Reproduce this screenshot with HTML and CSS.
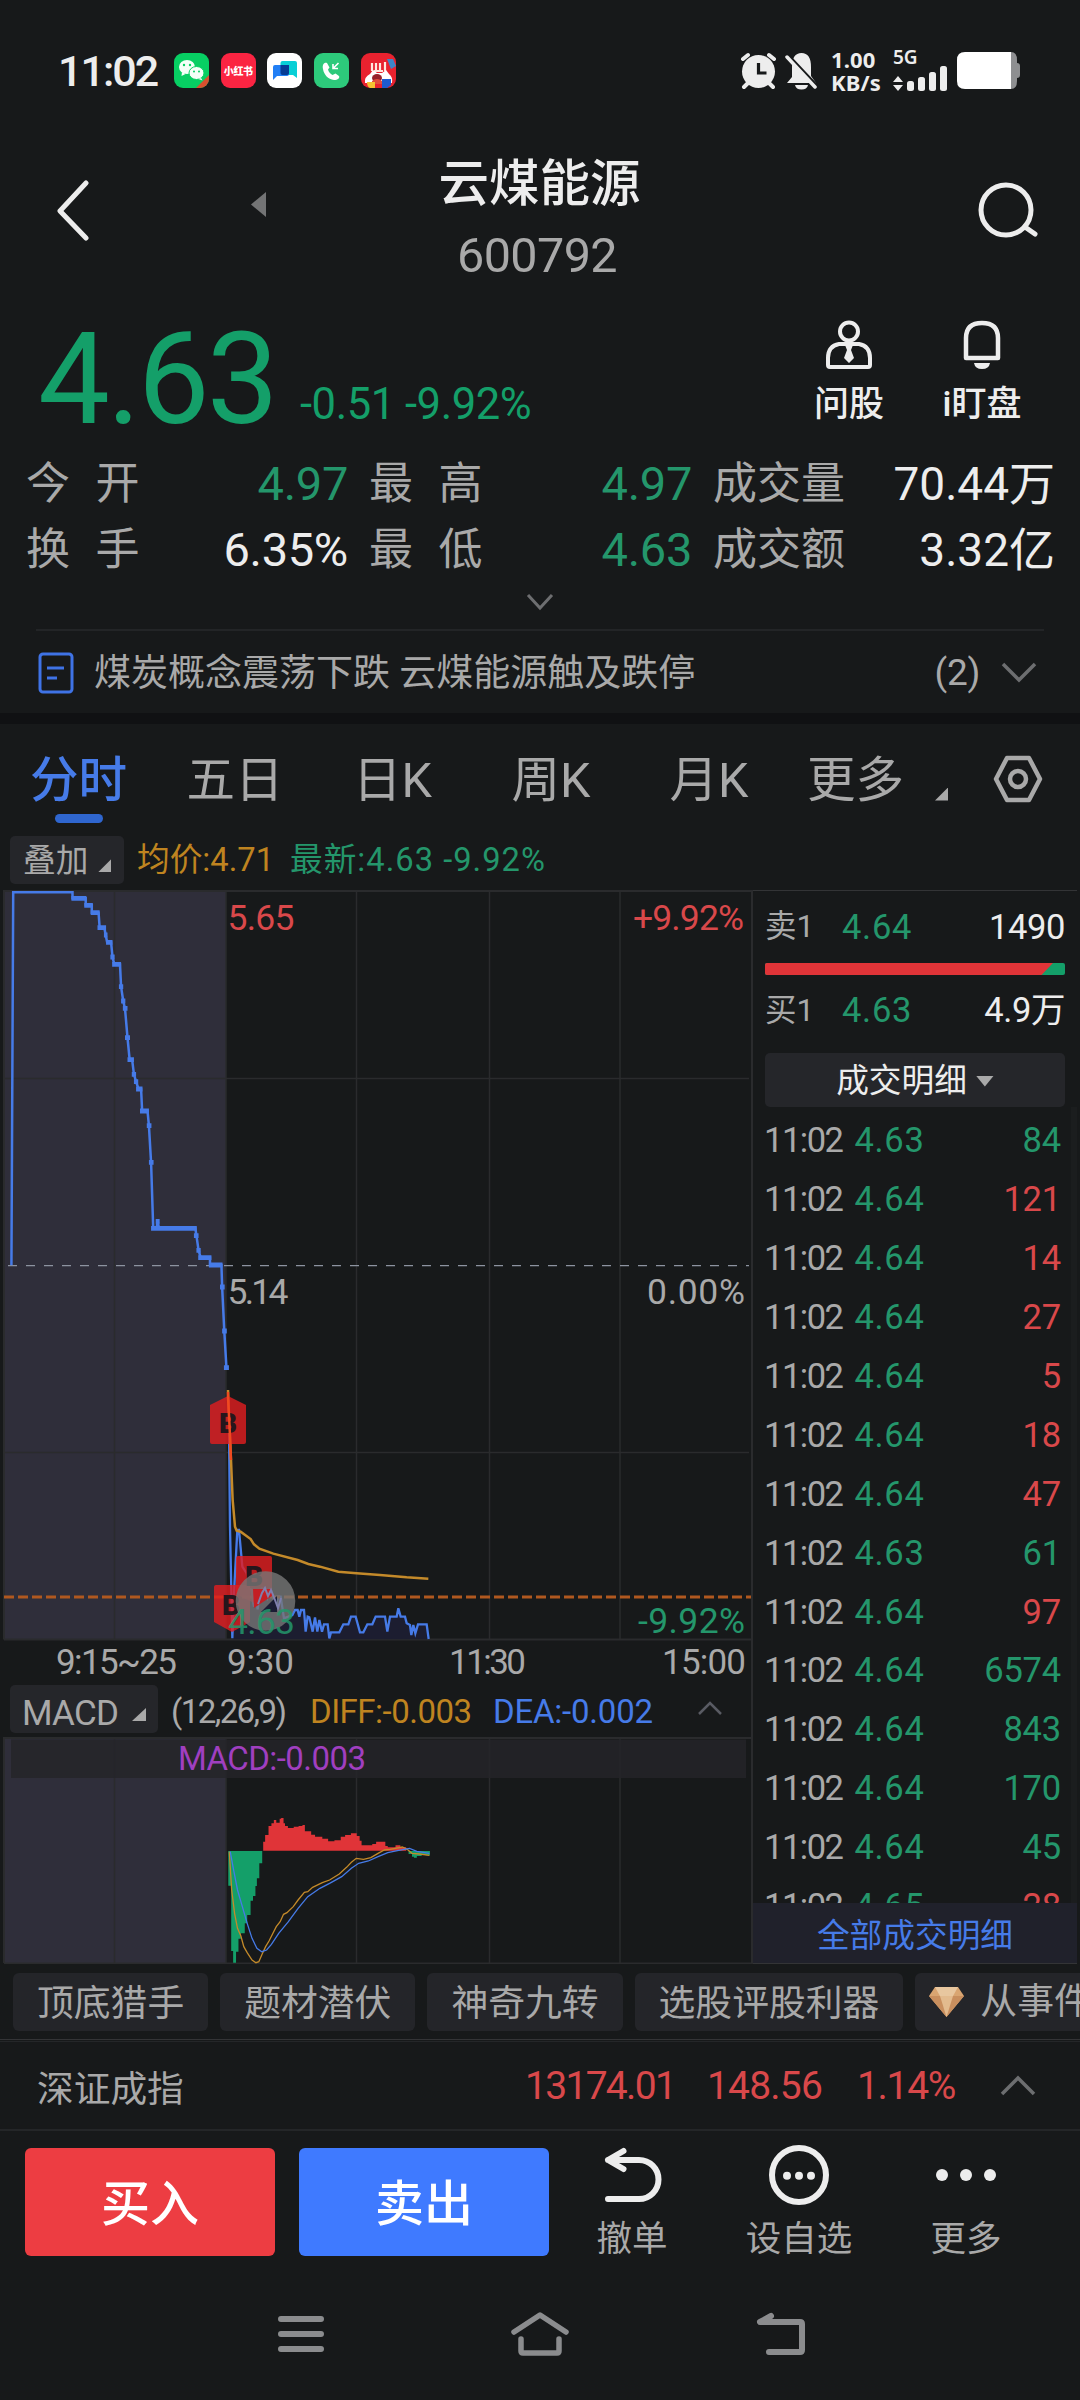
FILE: index.html
```html
<!DOCTYPE html>
<html lang="zh-CN">
<head>
<meta charset="utf-8">
<title>云煤能源 600792</title>
<link rel="stylesheet" href="styles.css">
</head>
<body>
<div class="phone">

  <div class="status">
    <span class="clock">11:02</span>
    <div class="apps">
      <svg width="35" height="35" viewBox="0 0 35 35"><rect width="35" height="35" rx="9" fill="#07cf63"/><path d="M35 22v4a9 9 0 0 1-9 9h-4z" fill="#d8502f"/><ellipse cx="13" cy="14" rx="8" ry="7" fill="#f4fff8"/><path d="M8 19l-.5 4 4-2z" fill="#f4fff8"/><ellipse cx="22.500" cy="20" rx="7.500" ry="6.500" fill="#f4fff8" stroke="#07cf63"/><path d="M27 25l1.500 2.500-4-1.500z" fill="#f4fff8"/><g fill="#07cf63"><circle cx="10" cy="12" r="1.200"/><circle cx="16" cy="12" r="1.200"/><circle cx="20" cy="18.500" r="1"/><circle cx="25" cy="18.500" r="1"/></g></svg>
      <span class="app-red">小红书</span>
      <svg width="35" height="35" viewBox="0 0 35 35"><rect width="35" height="35" rx="9" fill="#fff"/><path d="M15.500 8H28q2 0 2 2v15l-4-3H15.500q-2 0-2-2V10q0-2 2-2z" fill="#08cfd6"/><path d="M8 12h14v9q0 2-2 2H10l-4 4V14q0-2 2-2z" fill="#217ff5"/><path d="M13.500 12H22v8q0 2-2 2h-4.500q-2 0-2-2z" fill="#063c94"/></svg>
      <svg width="35" height="35" viewBox="0 0 35 35"><rect width="35" height="35" rx="9" fill="#2dca7b"/><path d="M13 10c-3-1-5 2-4 6 1 6 5 10 11 11 4 0 6-2 5-4l-3.500-2.500-3 1.500c-2-1-4-3-4.500-5.500l1.500-2z" fill="#fff"/><path d="M24.500 10l-5 5M19 11v4.500h5" fill="none" stroke="#fff" stroke-width="1.600"/></svg>
      <svg width="35" height="35" viewBox="0 0 35 35"><rect width="35" height="35" rx="9" fill="#e8222f"/><path d="M26 6l6 0 3 7-5 3z" fill="#3c86c8"/><path d="M11 10v8M15 10v8M13 18h9M19 10v8M24 9v9" stroke="#ffe8df" stroke-width="2.200"/><path d="M4 30q-1-6 5-9l3-4 4 3h5l4-3 3 4q4 3 3 9z" fill="#fff"/><ellipse cx="16" cy="25" rx="5" ry="4" fill="#98212a"/><path d="M11 28q5-4 10 0v3H11z" fill="#e34d3d"/><path d="M6 29h8v6H9q-3-1-3-6z" fill="#f6c332"/><path d="M21 26h9v6l-4 3h-5z" fill="#1d5bd0"/></svg>
    </div>
    <div class="signals">
      <svg class="alarm" width="37" height="38" viewBox="0 0 37 38"><g stroke="#ededed" stroke-width="4" stroke-linecap="round"><path d="M3 7l5-4M34 7l-5-4M8 31l-4 4M29 31l4 4"/></g><circle cx="18.500" cy="19.500" r="16.500" fill="#ededed"/><path d="M18.500 11v10h8" stroke="#17191a" stroke-width="3.200" fill="none"/></svg>
      <svg class="mute" width="33" height="38" viewBox="0 0 33 38"><path d="M2 31l5-6V15q0-14 9.500-14T26 15v9l5 7z" fill="#ededed"/><path d="M10 33h13q-1 4.500-6.500 4.500T10 33z" fill="#ededed"/><path d="M3 3l29 31" stroke="#17191a" stroke-width="3"/><path d="M2 5l28 30" stroke="#ededed" stroke-width="3.500" stroke-linecap="round"/></svg>
      <div class="speed"><span>1.00</span><span>KB/s</span></div>
      <div class="cell"><span>5G</span>
        <svg width="54" height="26" viewBox="0 0 54 26" fill="#ededed"><path d="M0 16l5-6 5 6zM0 19l5 6 5-6z"/><rect x="14" y="15" width="7" height="10" rx="2.500"/><rect x="25" y="11" width="7" height="14" rx="2.500"/><rect x="36" y="6" width="7" height="19" rx="2.500"/><rect x="47" y="0" width="7" height="25" rx="2.500"/></svg></div>
      <svg width="64" height="37" viewBox="0 0 64 37"><path d="M50 0h4q6 0 6 8v3q3 0 3 3v9q0 3-3 3v3q0 8-6 8h-4z" fill="#8e8f91"/><path d="M8 0h46v37H8q-8 0-8-8V8q0-8 8-8z" fill="#fff"/></svg>
    </div>
  </div>

  <header class="head">
    <svg class="back" width="36" height="62" viewBox="0 0 36 62"><path d="M31 3L5 31l26 27" fill="none" stroke="#ededed" stroke-width="5" stroke-linecap="round" stroke-linejoin="round"/></svg>
    <svg class="prev" width="15" height="25" viewBox="0 0 15 25"><path d="M15 0v25L0 12.500z" fill="#737475"/></svg>
    <div class="name"><h1>云煤能源</h1><p>600792</p></div>
    <svg class="find" width="64" height="58" viewBox="0 0 64 58"><circle cx="29" cy="28" r="25" fill="none" stroke="#ededed" stroke-width="5"/><path d="M48 45l10 7" stroke="#ededed" stroke-width="5" stroke-linecap="round"/></svg>
  </header>

  <section class="quote">
    <span class="price">4.63</span>
    <span class="delta">-0.51</span><span class="delta pct">-9.92%</span>
    <div class="act ask"><svg width="48" height="50" viewBox="0 0 48 50"><g fill="none" stroke="#ededed" stroke-width="4"><circle cx="24" cy="11.500" r="9"/><path d="M14 24h20q11 2 11 14v7q0 2-2 2H5q-2 0-2-2v-7q0-12 11-14z"/></g><path d="M20 25h8l-2 5 3 8-5 5-5-5 3-8z" fill="#ededed"/></svg><span>问股</span></div>
    <div class="act"><svg width="38" height="50" viewBox="0 0 38 50"><path d="M3 38V18Q3 3 19 3t16 15v20z" fill="none" stroke="#ededed" stroke-width="4.500" stroke-linejoin="round"/><path d="M11 43h16q-1 6-8 6t-8-6z" fill="#ededed"/></svg><span>i盯盘</span></div>
  </section>

  <section class="stats">
    <span class="k two">今开</span><b class="g">4.97</b><span class="k two">最高</span><b class="g">4.97</b><span class="k">成交量</span><b>70.44万</b>
    <span class="k two">换手</span><b>6.35%</b><span class="k two">最低</span><b class="g">4.63</b><span class="k">成交额</span><b>3.32亿</b>
  </section>
  <div class="expand"><svg width="30" height="18" viewBox="0 0 30 18"><path d="M3 2l12 13L27 2" fill="none" stroke="#6d6e70" stroke-width="3"/></svg></div>

  <section class="news">
    <svg width="36" height="42" viewBox="0 0 36 42" fill="none" stroke="#3f73e6" stroke-width="3"><rect x="2" y="2" width="32" height="38" rx="3"/><path d="M9 16h17M9 26h10"/></svg>
    <p>煤炭概念震荡下跌 云煤能源触及跌停</p>
    <span>(2)</span>
    <svg width="36" height="22" viewBox="0 0 36 22"><path d="M2 2l16 16L34 2" fill="none" stroke="#6d6e70" stroke-width="3.500"/></svg>
  </section>
  <div class="band"></div>

  <nav class="tabs">
    <span class="on">分时</span><span>五日</span><span>日K</span><span>周K</span><span>月K</span><span class="more">更多</span><i class="corner"></i>
    <svg width="50" height="48" viewBox="0 0 50 48" fill="none" stroke="#a9a9a9" stroke-width="4.500"><path d="M14 3h22l11 21-11 21H14L3 24z" stroke-linejoin="round"/><circle cx="25" cy="24" r="8"/></svg>
  </nav>

  <div class="legend">
    <span class="pill">叠加<i class="corner"></i></span>
    <span class="avg">均价:4.71</span>
    <span class="last">最新:4.63 -9.92%</span>
  </div>

  <main class="board">
    <svg class="chart" width="753" height="1074" viewBox="0 890 753 1074">
      <rect x="5" y="891" width="221" height="748" fill="#2f2e3a"/>
      <rect x="5" y="1738" width="221" height="225" fill="#2f2e3a"/>
      <g stroke="#2a2b2d" stroke-width="1.500" fill="none">
        <path d="M5 1078.500H749M5 1452.500H749M114.500 891V1639M356.500 891V1639M489.500 891V1639M620 891V1639M114.500 1738V1963M356.500 1738V1963M489.500 1738V1963M620 1738V1963M226 1738V1963M226 891V1639"/>
        <path d="M4 1963V1738H752M4 1639.500V891H752M4 1639.500H752M4 1963.500H752M752 890V1964" stroke-width="2"/>
      </g>
      <rect x="11" y="1739.500" width="735" height="38.500" fill="#242529" opacity=".85"/>

      <path d="M8 1265.700H749" stroke="#8d93a0" stroke-width="1.300" stroke-dasharray="9 9"/>

      <!-- call auction, 9:15 to 9:25 -->
      <g transform="translate(0 880) scale(.35714 .33333)" fill="none" stroke="#467be8">
        <path class="hair" stroke-width="2.500" d="M32 1156L37 37H203V55H240V76H257V98H276L279 143H292L296 165 300 187H311L315 231 320 253H336L339 320 345 363 350 385 357 473 363 539H370L375 583 381 605 388 627H395L398 693H413L417 737 423 847 429 1045H439L441 1020 445 1045H547L550 1067 556 1111 562 1133H588V1155H620L622 1221 628 1353 634 1463"/>
        <path class="hair" stroke-width="4.800" d="M200 55H242M236 76H260M254 98H279M273 143H297M291 165H301M297 187H315M309 231H321M314 253H339M333 320H345M339 363H351M344 385H357M350 473H364M357 539H375M369 583H381M375 605H387M381 627H399M392 693H417M411 737H424M417 847H430M423 1045H551M436 1024H447M543 1067H556M550 1111H562M555 1133H592M585 1155H623M616 1221H629M622 1353H635M627 1463H641"/>
      </g>

      <g font-size="35.500">
        <text x="227.500" y="930" class="r" textLength="67">5.65</text>
        <text x="227.500" y="1304" class="n" textLength="61">5.14</text>
        <text x="744" y="929.500" class="r" text-anchor="end" textLength="111">+9.92%</text>
        <text x="745" y="1304" class="n" text-anchor="end" textLength="98">0.00%</text>
        <text x="745" y="1633" class="gn" text-anchor="end" textLength="107">-9.92%</text>
      </g>

      <!-- intraday price and average -->
      <g transform="translate(180 1340) scale(.33333)" fill="none">
        <path d="M157 898L163 740 172 570 177 568 187 680 205 740 222 800 235 760 245 745 262 750 288 800 298 770 312 830H325L345 810H372L377 875 383 830 398 875 405 832 426 875 443 855 448 895 453 877H478L490 853H505L513 830H527L540 877H550L562 853H577L587 830H615L622 875 630 830H650L655 805 662 830H675L690 855 700 870 714 853H740L746 898z" fill="#1c1d30"/>
        <path class="hair" stroke="#467be8" stroke-width="2.300" d="M146 180L150 560 157 895 163 740 172 570H177L187 680 200 700 207 745 215 750 222 800 229 775 233 808 238 765 245 745H255L262 772 270 750 278 768 288 800 294 770H302L312 835 325 830 337 825 345 810H353L358 830 363 810H372L377 875 383 830 388 832 398 875 405 832 412 875 418 840 426 875 432 853H443L448 895 453 877H478L490 853H505L513 830H527L540 877H550L562 853H577L587 830H615L622 875 630 830H650L655 805 662 830H675L680 850 690 855 694 885 700 855 706 880 714 853H740L746 897"/>
        <path class="hair" stroke="#c48a2a" stroke-width="2.500" d="M144 150L148 250 153 360 158 480 165 560 170 572 182 575 212 597 222 613 238 626 280 641 353 660 385 672 420 680 475 695 530 700 600 705 680 712 745 716"/>
      </g>
      <path d="M4 1597H751" stroke="#b0581f" stroke-width="3" stroke-dasharray="10 4"/>

      <g fill="#e31d1f" fill-opacity=".8">
        <path d="M210 1405l18-9 18 9v37q0 2-2 2h-32q-2 0-2-2z"/>
        <path d="M236 1558q0-2 2-2h32q2 0 2 2v36l-18 9-18-9z"/>
        <path d="M214 1587q0-2 2-2h32q2 0 2 2v35l-18 10-18-10z"/>
      </g>
      <g class="flag"><text x="228" y="1433">B</text><text x="254" y="1586">B</text><text x="231" y="1615">B</text></g>
      <path d="M228 1392v5L229.500 1425 231 1460" stroke="#f04a20" stroke-width="2.500" fill="none"/>
      <circle cx="265.500" cy="1601" r="29.800" fill="#777" fill-opacity=".8"/>
      <path d="M253 1589h19v7l-18 12z" fill="#c41f24"/>
      <path d="M261 1612l16-16v16z" fill="#1b1d34"/>
      <path d="M258 1604l4-11 3-5 3 8 3-6 4 10 3 8 3-10" stroke="#7f7fae" stroke-width="2" fill="none"/>
      <text x="228" y="1634" font-size="35.500" class="gn" textLength="67" opacity=".85">4.63</text>

      <g font-size="35" class="n">
        <text x="56" y="1674" textLength="121">9:15~25</text><text x="227" y="1674" textLength="67">9:30</text><text x="449" y="1674" textLength="77">11:30</text><text x="662" y="1674" textLength="84">15:00</text>
      </g>

      <rect x="10" y="1685" width="148" height="48" rx="5" fill="#25262a"/>
      <path d="M146 1708v13h-14z" fill="#a9a9a9"/>
      <g font-size="33">
        <text x="22" y="1725" class="n" font-size="35" textLength="97">MACD</text>
        <text x="171" y="1722.500" class="n" textLength="116">(12,26,9)</text>
        <text x="310" y="1722.500" fill="#bf8420" textLength="162">DIFF:-0.003</text>
        <text x="493" y="1722.500" fill="#467be8" textLength="160">DEA:-0.002</text>
        <text x="178" y="1769.500" fill="#a03fc0" textLength="188">MACD:-0.003</text>
      </g>
      <path d="M699 1714l11-11 11 11" fill="none" stroke="#595b63" stroke-width="2.500"/>

      <!-- MACD histogram, DIFF and DEA -->
      <g transform="translate(0 1580) scale(.48469 .33333)" fill="none">
        <path fill="#149f69" d="M471 813V917H477V1113H481V1148H487V1115H492V1076H497V1060H505V1030H510V1005H517V962H522V948H527V918H530V895H535V850H541V813zM843 813V822H850V830H854V833H860V828H870V824H878V826H887V813z"/>
        <path fill="#e03438" d="M543 812V785H547V765H554V738H560V730H565V720H570V728H577V716H580V714H585V730H588V738H594V744H606V740H616V738H624V735H629V754H642V764H650V770H665V776H677V784H690V781H703V770H712V765H724V760H736V768H742V782H746V796H768V792H776V785H795V798H800V802H816V796H826V802H838V812z"/>
        <path class="hair" stroke="#c48a2a" stroke-width="1.300" d="M473 815L478 930 484 1000 490 1045 497 1068 503 1100 510 1118 520 1140 528 1148 534 1145 540 1125 548 1100 555 1083 570 1040 578 1025 585 1003 592 998 605 980 615 960 628 937 635 935 645 922 665 908 680 900 700 882 715 862 725 847 735 835 750 838 765 833 780 820 793 810 805 808 830 801 840 808 850 820 865 822 886 826"/>
        <path class="hair" stroke="#467be8" stroke-width="1.300" d="M475 815L482 870 490 930 500 980 510 1030 520 1075 530 1105 540 1115 550 1110 560 1093 575 1060 595 1025 615 985 635 950 660 925 680 910 705 890 725 865 740 850 760 843 780 830 800 818 820 812 845 805 860 814 886 820"/>
      </g>
    </svg>

    <aside class="side">
      <div class="level"><span>卖1</span><em>4.64</em><b>1490</b></div>
      <svg class="ratio" width="300" height="12" viewBox="0 0 300 12"><rect width="300" height="12" rx="2" fill="#149f69"/><path d="M2 0H288L276.500 12H2q-2 0-2-2V2q0-2 2-2z" fill="#e03438"/></svg>
      <div class="level buy"><span>买1</span><em>4.63</em><b>4.9万</b></div>
      <div class="detail">成交明细<i></i></div>
      <div class="trades">
        <p>11:02<em>4.63</em><b class="g">84</b></p>
        <p>11:02<em>4.64</em><b>121</b></p>
        <p>11:02<em>4.64</em><b>14</b></p>
        <p>11:02<em>4.64</em><b>27</b></p>
        <p>11:02<em>4.64</em><b>5</b></p>
        <p>11:02<em>4.64</em><b>18</b></p>
        <p>11:02<em>4.64</em><b>47</b></p>
        <p>11:02<em>4.63</em><b class="g">61</b></p>
        <p>11:02<em>4.64</em><b>97</b></p>
        <p>11:02<em>4.64</em><b class="g">6574</b></p>
        <p>11:02<em>4.64</em><b class="g">843</b></p>
        <p>11:02<em>4.64</em><b class="g">170</b></p>
        <p>11:02<em>4.64</em><b class="g">45</b></p>
        <p>11:02<em>4.65</em><b>28</b></p>
      </div>
      <div class="all">全部成交明细</div>
    </aside>
  </main>

  <div class="chips">
    <span>顶底猎手</span><span>题材潜伏</span><span>神奇九转</span><span>选股评股利器</span>
    <span class="gem"><svg width="35" height="30" viewBox="0 0 35 30"><path d="M6 0h23l6 9-17.500 21L0 9z" fill="#d9a571"/><path d="M0 9h35L17.500 30z" fill="#c98f5e"/><path d="M11 9h13l-6.500 21z" fill="#e3bb8e"/><path d="M6 0h23l-5 9H11z" fill="#e8c79f"/></svg>从事件</span>
  </div>

  <section class="index">
    <span>深证成指</span><b class="i1">13174.01</b><b class="i2">148.56</b><b class="i3">1.14%</b>
    <svg width="36" height="21" viewBox="0 0 36 21"><path d="M2 19L18 3l16 16" fill="none" stroke="#6d6e70" stroke-width="3.500"/></svg>
  </section>

  <footer class="trade">
    <button class="buyin">买入</button><button class="sell">卖出</button>
    <div class="tool"><svg width="60" height="60" viewBox="602 2145 60 60"><path d="M608 2160h31a19.500 19.500 0 0 1 0 39h-31M623.500 2151l-15.500 9 15.500 9" fill="none" stroke="#ededed" stroke-width="6" stroke-linecap="round" stroke-linejoin="round"/></svg><span>撤单</span></div>
    <div class="tool wide"><svg width="60" height="60" viewBox="0 0 60 60"><circle cx="30" cy="30" r="27" fill="none" stroke="#ededed" stroke-width="6"/><g fill="#ededed"><circle cx="18" cy="30.700" r="4"/><circle cx="30" cy="30.700" r="4"/><circle cx="42" cy="30.700" r="4"/></g></svg><span>设自选</span></div>
    <div class="tool"><svg width="60" height="60" viewBox="0 0 60 60" fill="#ededed"><circle cx="6" cy="30" r="6"/><circle cx="30" cy="30" r="6"/><circle cx="54" cy="30" r="6"/></svg><span>更多</span></div>
  </footer>

  <div class="sysnav">
    <svg width="46" height="46" viewBox="0 0 46 46"><path d="M3 8h40M3 23h40M3 38h40" stroke="#8b8c8e" stroke-width="6" stroke-linecap="round"/></svg>
    <svg width="60" height="46" viewBox="0 0 60 46" fill="none" stroke="#8b8c8e" stroke-width="5.500" stroke-linecap="round" stroke-linejoin="round"><path d="M4 21L30 4l26 17"/><path d="M11 28v12q0 2 2 2h34q2 0 2-2V28"/></svg>
    <svg width="50" height="46" viewBox="755 2311 50 46" fill="none" stroke="#8b8c8e" stroke-width="6" stroke-linecap="round" stroke-linejoin="round"><path d="M770 2316l-11 6h40q2 0 2 2v26q0 2-2 2h-31"/></svg>
  </div>
</div>
</body>
</html>
```
FILE: styles.css
```css
* { box-sizing: border-box; margin: 0; padding: 0; }
body { background: #17191a; }
.phone {
  width: 1080px; height: 2400px; overflow: hidden;
  background: #17191a; color: #ededed;
  font-family: Roboto, "Noto Sans CJK SC", sans-serif;
}
svg { display: block; flex: none; }
b, em { font-weight: 400; font-style: normal; }

/* system status bar */
.status { height: 141px; padding: 0 59px 0 58px; display: flex; align-items: center; }
.clock { width: 116px; font-size: 43px; font-weight: 500; letter-spacing: -2px; line-height: 50px; }
.apps { display: flex; gap: 11.700px; }
.app-red { width: 35px; height: 35px; border-radius: 9px; background: #fb2442; color: #fff; font: 900 10px/35px "Noto Sans CJK SC", sans-serif; text-align: center; letter-spacing: -.4px; white-space: nowrap; }
.signals { margin-left: auto; display: flex; align-items: center; }
.alarm { margin-right: 8px; }
.speed { margin-left: 13px; width: 62px; display: flex; flex-direction: column; font: 700 22px/23px "Noto Sans", sans-serif; letter-spacing: .1px; }
.cell { width: 64px; font: 600 19px/17px "Noto Sans", sans-serif; }

/* title */
.head { height: 149px; display: flex; align-items: flex-start; }
.back { margin: 39px 0 0 55px; }
.prev { margin: 51px 0 0 160px; }
.name { flex: 1; margin: 12px -9px 0 0; text-align: center; }
.name h1 { font-size: 50.500px; font-weight: 500; line-height: 62px; }
.name p { margin: 11px 5px 0 0; color: #a9a9a9; font-size: 48.500px; line-height: 60px; letter-spacing: -.6px; }
.find { margin: 41px 39px 0 173px; }

/* last price */
.quote { height: 160px; padding: 25px 57px 0 38px; display: flex; color: #149f69; }
.price { font-size: 128px; line-height: 128px; letter-spacing: -3px; width: 262px; }
.delta { align-self: flex-end; margin-bottom: 24px; font-size: 43.500px; line-height: 43px; width: 105px; letter-spacing: -.4px; }
.pct { width: 200px; }
.act { display: flex; flex-direction: column; align-items: center; gap: 9px; margin: 5px 0 0 51px; width: 82px; color: #ededed; font-size: 35px; font-weight: 500; line-height: 52px; white-space: nowrap; }
.ask { margin-left: auto; }

.stats { height: 132px; display: grid; grid-template-columns: 163px 159px 185px 159px 165px 196px; grid-auto-rows: 66px; padding-left: 26px; line-height: 68px; }
.stats .k { color: #a9a9a9; font-size: 44px; white-space: nowrap; padding-left: 21px; }
.stats .k:nth-child(6n + 1) { padding-left: 0; }
.stats .two { letter-spacing: 25.500px; }
.stats b { font-size: 47px; text-align: right; letter-spacing: -.3px; }
.stats b:nth-child(6n) { letter-spacing: 0; margin-right: -2px; font-size: 46px; }
.g, .stats .g { color: #24966b; }
.expand { height: 49px; margin: 0 36px; padding-top: 11px; border-bottom: 2px solid #232527; display: flex; justify-content: center; align-items: flex-start; }

.news { height: 82px; padding: 2px 43px 0 38px; display: flex; align-items: center; color: #a9a9a9; font-size: 37px; line-height: 44px; }
.news p { flex: 1; margin: 2px 0 0 20px; }
.news span { margin-right: 21px; letter-spacing: -.3px; }
.band { height: 11px; background: #101113; }

/* period tabs */
.tabs { height: 107px; display: grid; grid-template-columns: 157px 156px 159px 158px 158px 147px 58px 50px; align-items: center; color: #a9a9a9; font-size: 48.500px; line-height: 107px; }
.tabs span { text-align: center; height: 107px; padding-top: 3px; }
.tabs .on { color: #467be8; font-weight: 500; display: flex; flex-direction: column; align-items: center; }
.tabs .on::after { content: ""; width: 48px; height: 9px; border-radius: 5px; background: #2f66cf; margin-top: -20px; }
.tabs .more { padding-right: 12px; }
.tabs svg { margin-top: 2px; }
.corner { width: 13px; height: 13px; background: #a9a9a9; clip-path: polygon(100% 0, 100% 100%, 0 100%); }
.tabs .corner { margin: 33px 0 0 0; }
.legend { height: 59px; padding: 5px 0 0 10px; display: flex; font-size: 32.700px; line-height: 49px; white-space: nowrap; }
.pill { width: 114px; height: 48px; border-radius: 5px; background: #25262a; color: #a9a9a9; padding: 3px 0 0 13px; display: flex; align-items: center; gap: 10px; }
.pill .corner { margin-top: 8px; }
.avg { margin-left: 13px; width: 153px; color: #bf8420; }
.last { color: #24966b; letter-spacing: 1px; }

/* chart and order book */
.board { display: flex; height: 1074px; }
.hair { vector-effect: non-scaling-stroke; }
.r { fill: #d9484a; }
.n { fill: #a9a9a9; }
.gn { fill: #24966b; }
.flag { fill: #26161c; font-size: 28px; font-weight: 900; text-anchor: middle; }
.side { flex: 1; margin-right: 3px; border-top: 1px solid #333436; border-bottom: 1px solid #333436; display: flex; flex-direction: column; }
.level { height: 72px; padding: 0 12px; line-height: 72px; display: grid; grid-template-columns: 77px 90px 1fr; font-size: 34.500px; color: #a9a9a9; white-space: nowrap; }
.level span { font-size: 31.500px; }
.level em { color: #24966b; letter-spacing: .7px; }
.level b { color: #ededed; text-align: right; letter-spacing: -.4px; }
.ratio { margin-left: 12px; }
.buy { height: 78px; line-height: 71px; }
.detail { width: 300px; height: 54px; margin-left: 12px; border-radius: 5px; background: #25262a; font-size: 32.700px; line-height: 54px; padding-top: 2px; display: flex; align-items: center; justify-content: center; gap: 9px; }
.detail i { width: 18px; height: 11px; background: #a9a9a9; clip-path: polygon(0 0, 100% 0, 50% 100%); }
.trades { height: 796px; overflow: hidden; padding: 4px 10px 0 11px; border-right: 6px solid #1b1d1e; }
.trades p { height: 58.950px; line-height: 58.950px; font-size: 34.500px; color: #a9a9a9; display: flex; letter-spacing: -1.500px; }
.trades em { margin-left: 12px; color: #24966b; letter-spacing: .7px; }
.trades b { margin-left: auto; color: #d9484a; letter-spacing: -.2px; }
.trades .g { color: #24966b; }
.all { flex: 1; background: #20212b; color: #467be8; font-size: 32.700px; line-height: 66px; text-align: center; height: 60px; overflow: hidden; }

/* shortcuts */
.chips { height: 76px; padding: 9px 0 0 13px; display: flex; gap: 12px; overflow: hidden; border-bottom: 1px solid #333436; }
.chips span { flex: none; height: 58px; padding: 0 24px; border-radius: 6px; background: #242529; color: #a9a9a9; font-size: 36.800px; line-height: 62px; }
.chips .gem { display: flex; align-items: center; gap: 16px; padding-left: 14px; }
.index { height: 90px; margin-top: 1px; padding: 0 44px 0 37px; display: flex; align-items: center; border-top: 1px solid #242628; border-bottom: 2px solid #242628; font-size: 39px; }
.index span { font-size: 36.700px; color: #a9a9a9; }
.index b { color: #d9484a; white-space: nowrap; padding-top: 1px; }
.i1 { margin-left: auto; width: 182px; letter-spacing: -1.700px; }
.i2 { width: 150px; letter-spacing: -.8px; }
.i3 { width: 143px; letter-spacing: -1.300px; }

/* trade bar */
.trade { height: 145px; padding: 17px 0 0 25px; display: flex; align-items: flex-start; }
.trade button { width: 250px; height: 108px; margin-right: 24px; border: 0; border-radius: 6px; color: #fff; font: 500 49px/108px Roboto, "Noto Sans CJK SC", sans-serif; padding-top: 3px; }
.buyin { background: #ed3d42; }
.sell { background: #3f7aff; }
.tool { width: 118px; display: flex; flex-direction: column; align-items: center; margin-top: -3px; color: #a9a9a9; font-size: 35.500px; line-height: 69px; }
.wide { width: 216px; }
.sysnav { height: 124px; display: flex; justify-content: center; align-items: center; gap: 186px; padding: 0 0 8px 3px; }
```
